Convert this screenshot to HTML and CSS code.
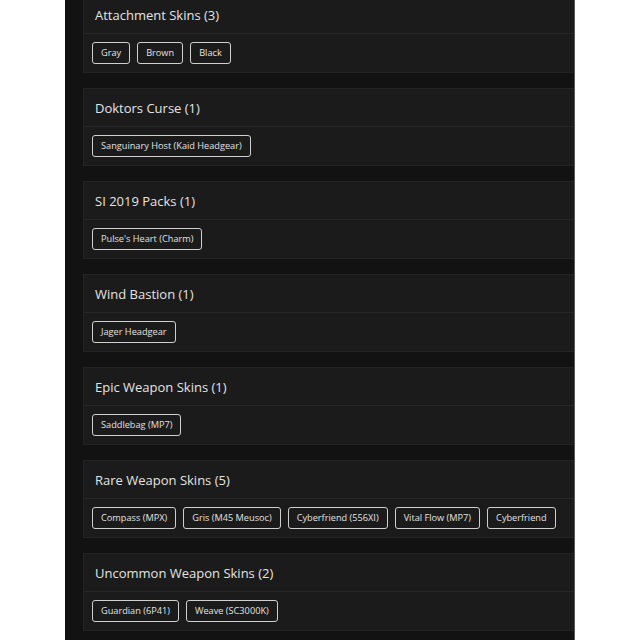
FILE: index.html
```html
<!DOCTYPE html>
<html lang="en">
<head>
    <meta charset="UTF-8">
    <meta name="viewport" content="width=device-width, initial-scale=1.0">
    <title>Inventory - Item Collections</title>
    <link rel="stylesheet" href="styles.css">
</head>
<body>
    <div class="panel">
        <div class="collections">
            <div class="card">
                <div class="card-head">Attachment Skins (3)</div>
                <div class="card-body">
                    <span class="tag">Gray</span>
                    <span class="tag">Brown</span>
                    <span class="tag">Black</span>
                </div>
            </div>

            <div class="card">
                <div class="card-head">Doktors Curse (1)</div>
                <div class="card-body">
                    <span class="tag">Sanguinary Host (Kaid Headgear)</span>
                </div>
            </div>

            <div class="card">
                <div class="card-head">SI 2019 Packs (1)</div>
                <div class="card-body">
                    <span class="tag">Pulse's Heart (Charm)</span>
                </div>
            </div>

            <div class="card">
                <div class="card-head">Wind Bastion (1)</div>
                <div class="card-body">
                    <span class="tag">Jager Headgear</span>
                </div>
            </div>

            <div class="card">
                <div class="card-head">Epic Weapon Skins (1)</div>
                <div class="card-body">
                    <span class="tag">Saddlebag (MP7)</span>
                </div>
            </div>

            <div class="card">
                <div class="card-head">Rare Weapon Skins (5)</div>
                <div class="card-body">
                    <span class="tag">Compass (MPX)</span>
                    <span class="tag">Gris (M45 Meusoc)</span>
                    <span class="tag">Cyberfriend (556XI)</span>
                    <span class="tag">Vital Flow (MP7)</span>
                    <span class="tag">Cyberfriend</span>
                </div>
            </div>

            <div class="card">
                <div class="card-head">Uncommon Weapon Skins (2)</div>
                <div class="card-body">
                    <span class="tag">Guardian (6P41)</span>
                    <span class="tag">Weave (SC3000K)</span>
                </div>
            </div>
        </div>
    </div>
</body>
</html>
```

FILE: styles.css
```css
body {
    margin: 0;
    background: #ffffff;
    font-family: 'Open Sans', 'Noto Sans', sans-serif;
}

.panel {
    margin-left: 65px;
    width: 509px;
    height: 640px;
    background: #121212;
    border-right: 1px solid #5a5a5a;
    overflow: hidden;
}

.collections {
    display: flex;
    flex-direction: column;
    gap: 15px;
    margin-top: -5px;
    padding-left: 18px;
}

.card {
    background: #1b1b1b;
    border: 1px solid #232323;
    margin-right: -20px;
}

.card-head {
    height: 37px;
    display: flex;
    align-items: center;
    padding-left: 11px;
    border-bottom: 1px solid #262626;
    color: #e4e4e4;
    font-size: 13px;
    font-weight: 500;
}

.card-body {
    height: 38px;
    display: flex;
    align-items: center;
    gap: 7px;
    padding-left: 8px;
    white-space: nowrap;
}

.tag {
    height: 20px;
    line-height: 20px;
    padding: 0 8px;
    border: 1px solid #cfcfcf;
    border-radius: 3px;
    color: #e2e2e2;
    font-size: 9.2px;
}
```
